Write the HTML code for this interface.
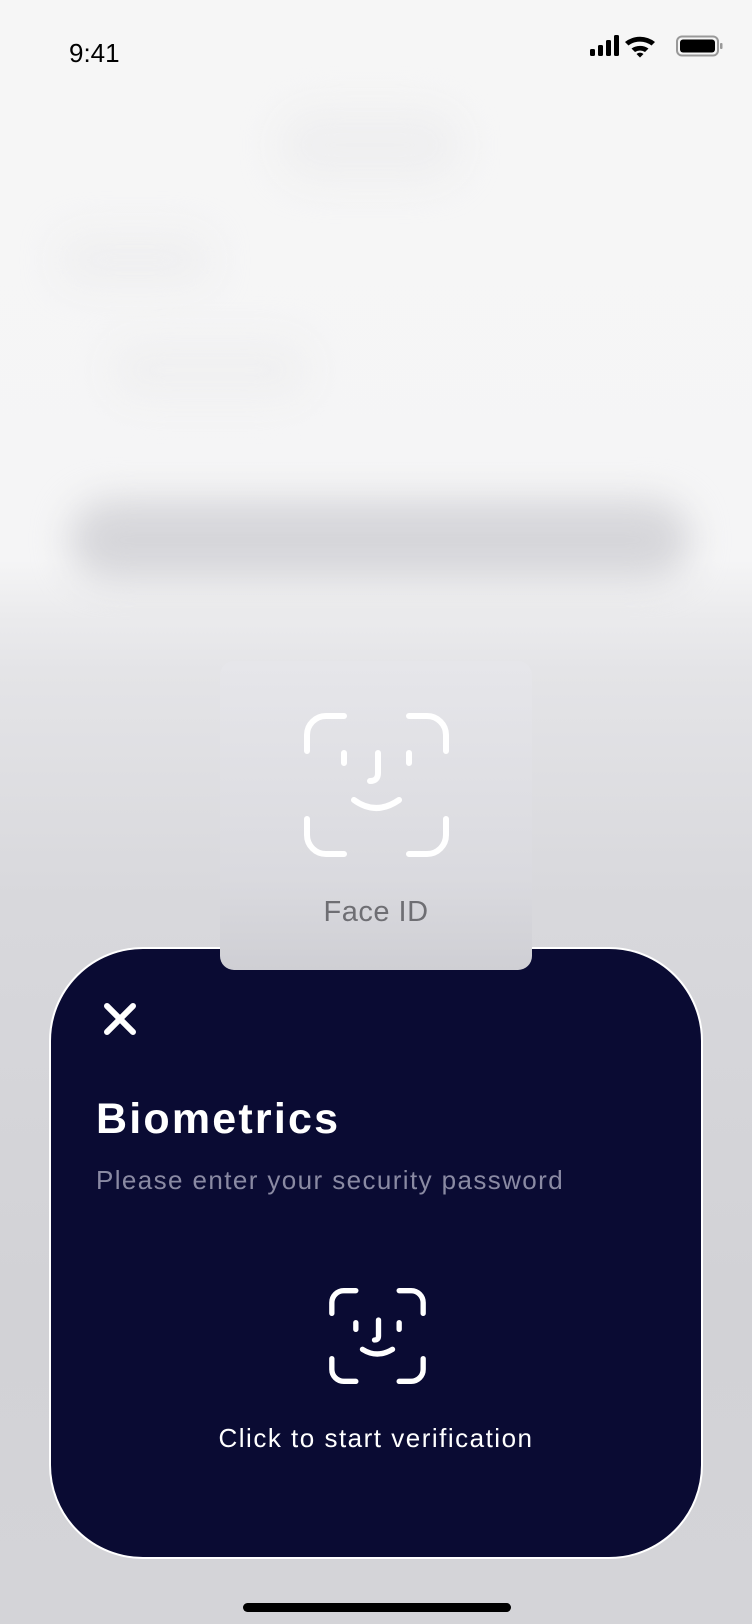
<!DOCTYPE html>
<html><head><meta charset="utf-8"><style>
*{margin:0;padding:0;box-sizing:border-box}
body{width:752px;height:1624px;overflow:hidden;position:relative;font-family:"Liberation Sans",sans-serif;
background:linear-gradient(#f6f6f6 0,#f5f5f6 560px,#ebebed 615px,#e4e4e7 670px,#d8d8dc 900px,#d2d2d6 1300px,#d4d4d8 1624px)}
.blur{position:absolute;filter:blur(18px);border-radius:40px}
.abs{position:absolute}
</style></head><body>
<div class="blur" style="left:70px;top:500px;width:620px;height:80px;background:#d6d6da"></div>
<div class="blur" style="left:280px;top:110px;width:180px;height:70px;background:#efeff0"></div>
<div class="blur" style="left:60px;top:235px;width:150px;height:50px;background:#efeff0"></div>
<div class="blur" style="left:110px;top:340px;width:200px;height:60px;background:#f0f0f1"></div>
<div class="abs" style="left:69px;top:38px;font-size:26px;color:#000">9:41</div>
<svg class="abs" style="left:590px;top:35px" width="135" height="24" viewBox="0 0 135 24">
<rect x="0" y="14" width="5" height="7" rx="1.5"/><rect x="8" y="10" width="5" height="11" rx="1.5"/><rect x="16" y="5" width="5" height="16" rx="1.5"/><rect x="24" y="0" width="5" height="21" rx="1.5"/>
<path d="M35 7 A24 24 0 0 1 65 7 L61.5 10.5 A19 19 0 0 0 38.5 10.5Z M41.5 13.5 A15 15 0 0 1 58.5 13.5 L55 17 A10 10 0 0 0 45 17Z M46.5 19 L50 22.5 L53.5 19 A5 5 0 0 0 46.5 19Z" fill="#000"/>
<rect x="87" y="1.5" width="41" height="19" rx="5" fill="none" stroke="#999" stroke-width="2"/><rect x="90" y="4.5" width="35" height="13" rx="3"/><rect x="130" y="8" width="2.5" height="6" rx="1" fill="#999"/>
</svg>
<div class="abs" style="left:49px;top:947px;width:654px;height:612px;border-radius:94px;background:#0a0b33;border:2px solid #fff"></div>
<div class="abs" style="left:220px;top:661px;width:312px;height:309px;border-radius:14px;background:linear-gradient(#e6e6ea,#dadadf 70%,#cfcfd4)"></div>
<svg class="abs" style="left:304px;top:713px" width="145" height="144" viewBox="0 0 145 144" fill="none" stroke="#fff" stroke-width="6" stroke-linecap="round">
<path d="M3 38V22A19 19 0 0 1 22 3H40 M105 3H123A19 19 0 0 1 142 22V38 M142 106V122A19 19 0 0 1 123 141H105 M40 141H22A19 19 0 0 1 3 122V106"/>
<path d="M40 40V50 M105 40V50 M74 40V60Q74 68 66 68 M50 87Q72 103 95 87"/>
</svg>
<div class="abs" style="left:220px;top:896px;width:312px;text-align:center;font-size:29px;color:#6e6e73;letter-spacing:0.5px">Face ID</div>
<svg class="abs" style="left:102px;top:1002px" width="36" height="34" viewBox="0 0 36 34" stroke="#fff" stroke-width="6" stroke-linecap="round"><path d="M5 4L31 30M31 4L5 30"/></svg>
<div class="abs" style="left:96px;top:1095px;font-size:43px;font-weight:bold;color:#fff;letter-spacing:2.2px">Biometrics</div>
<div class="abs" style="left:96px;top:1165px;font-size:26px;color:#8a8aa3;letter-spacing:1.4px">Please enter your security password</div>
<svg class="abs" style="left:329px;top:1288px" width="97" height="96" viewBox="0 0 145 144" fill="none" stroke="#fff" stroke-width="8" stroke-linecap="round">
<path d="M4 38V22A18 18 0 0 1 22 4H40 M105 4H123A18 18 0 0 1 141 22V38 M141 106V122A18 18 0 0 1 123 140H105 M40 140H22A18 18 0 0 1 4 122V106"/>
<path d="M40 52V62 M105 52V62 M74 48V72Q74 78 68 78 M50 92Q72 106 95 92"/>
</svg>
<div class="abs" style="left:49px;top:1423px;width:654px;text-align:center;font-size:26px;color:#fff;letter-spacing:1.5px">Click to start verification</div>
<div class="abs" style="left:243px;top:1603px;width:268px;height:9px;border-radius:5px;background:#000"></div>
</body></html>
